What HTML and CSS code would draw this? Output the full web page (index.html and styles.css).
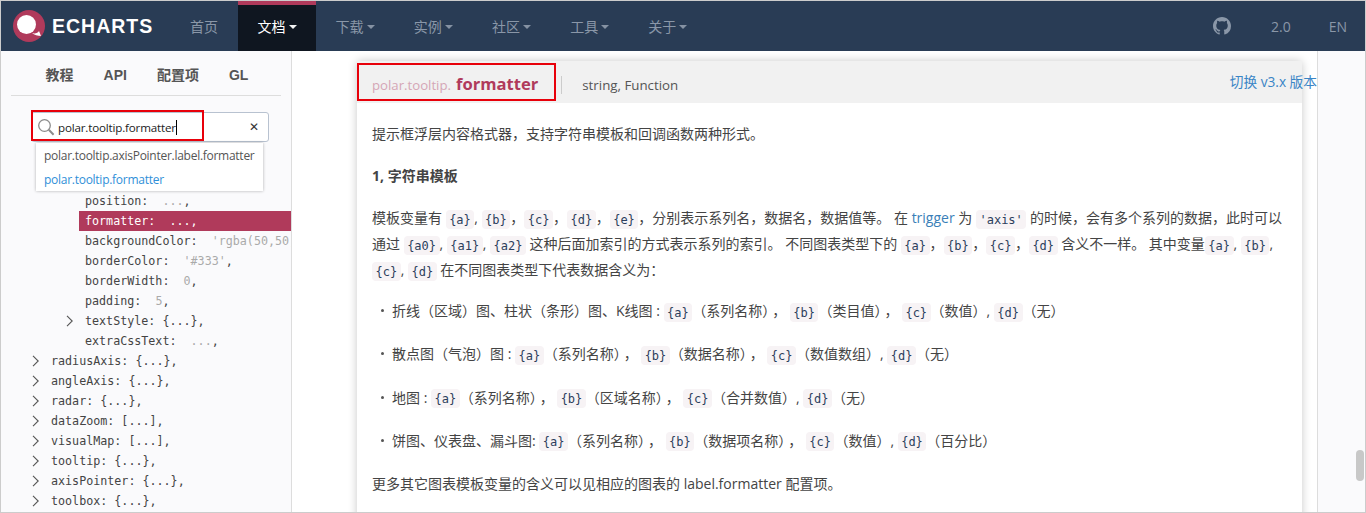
FILE: index.html
```html
<!DOCTYPE html>
<html lang="zh">
<head>
<meta charset="utf-8">
<title>ECharts</title>
<link rel="stylesheet" href="styles.css">
</head>
<body>
<svg class="defs" width="0" height="0"><symbol id="chev" viewBox="0 0 7 12"><path d="M1 .8 6.2 6 1 11.2" fill="none" stroke="#555" stroke-width="1.1"/></symbol></svg>
<div class="frame">
  <header class="nav">
    <a class="logo">
      <svg class="logo-mark" width="34" height="34" viewBox="0 0 34 34"><circle cx="17" cy="17" r="16" fill="#b03a5b"/><circle cx="14.5" cy="15.5" r="9.5" fill="#fff"/><path d="M20 24c3 1 6 0 7-2l2 5c-3 0-7-1-9-3z" fill="#fff"/></svg>
      <span class="logo-text">ECHARTS</span>
    </a>
    <a class="nav-item home">首页</a>
    <a class="nav-item active">文档<i class="caret"></i></a>
    <a class="nav-item">下载<i class="caret"></i></a>
    <a class="nav-item">实例<i class="caret"></i></a>
    <a class="nav-item">社区<i class="caret"></i></a>
    <a class="nav-item">工具<i class="caret"></i></a>
    <a class="nav-item">关于<i class="caret"></i></a>
    <div class="nav-right">
      <svg class="gh" width="18" height="18" viewBox="0 0 16 16"><path fill="#8a97a8" d="M8 0C3.58 0 0 3.58 0 8c0 3.54 2.29 6.53 5.47 7.59.4.07.55-.17.55-.38 0-.19-.01-.82-.01-1.49-2.01.37-2.53-.49-2.69-.94-.09-.23-.48-.94-.82-1.13-.28-.15-.68-.52-.01-.53.63-.01 1.08.58 1.23.82.72 1.21 1.87.87 2.33.66.07-.52.28-.87.51-1.07-1.78-.2-3.64-.89-3.64-3.95 0-.87.31-1.59.82-2.15-.08-.2-.36-1.02.08-2.12 0 0 .67-.21 2.2.82.64-.18 1.32-.27 2-.27s1.36.09 2 .27c1.53-1.04 2.2-.82 2.2-.82.44 1.1.16 1.92.08 2.12.51.56.82 1.27.82 2.15 0 3.07-1.87 3.75-3.65 3.95.29.25.54.73.54 1.48 0 1.07-.01 1.93-.01 2.2 0 .21.15.46.55.38A8.01 8.01 0 0 0 16 8c0-4.42-3.58-8-8-8z"/></svg>
      <a class="ver">2.0</a>
      <a class="lang">EN</a>
    </div>
  </header>
  <div class="main">
    <aside class="sidebar">
      <nav class="tabs">
        <a class="tab">教程</a>
        <a class="tab">API</a>
        <a class="tab on">配置项</a>
        <a class="tab">GL</a>
      </nav>
      <div class="search">
        <svg class="glass" width="18" height="18" viewBox="0 0 18 18"><circle cx="7.5" cy="7.5" r="5.8" fill="none" stroke="#8c8c8c" stroke-width="1.3"/><path d="M11.8 11.8 16.6 16.8" stroke="#8c8c8c" stroke-width="2"/></svg>
        <span class="query">polar.tooltip.formatter</span><i class="cursor"></i>
        <span class="clear">✕</span>
        <div class="suggest">
          <div class="sg">polar.tooltip.axisPointer.label.formatter</div>
          <div class="sg hit">polar.tooltip.formatter</div>
        </div>
        <div class="mark mark-search"></div>
      </div>
      <ul class="tree">
        <li class="row d2">position:  <span class="v">...</span>,</li>
        <li class="row d2 sel">formatter:  <span class="v">...</span>,</li>
        <li class="row d2">backgroundColor:  <span class="v">'rgba(50,50,50,0.7)'</span>,</li>
        <li class="row d2">borderColor:  <span class="v">'#333'</span>,</li>
        <li class="row d2">borderWidth:  <span class="v">0</span>,</li>
        <li class="row d2">padding:  <span class="v">5</span>,</li>
        <li class="row d2"><svg class="chev"><use href="#chev"/></svg>textStyle: {...},</li>
        <li class="row d2">extraCssText:  <span class="v">...</span>,</li>
        <li class="row d1"><svg class="chev"><use href="#chev"/></svg>radiusAxis: {...},</li>
        <li class="row d1"><svg class="chev"><use href="#chev"/></svg>angleAxis: {...},</li>
        <li class="row d1"><svg class="chev"><use href="#chev"/></svg>radar: {...},</li>
        <li class="row d1"><svg class="chev"><use href="#chev"/></svg>dataZoom: [...],</li>
        <li class="row d1"><svg class="chev"><use href="#chev"/></svg>visualMap: [...],</li>
        <li class="row d1"><svg class="chev"><use href="#chev"/></svg>tooltip: {...},</li>
        <li class="row d1"><svg class="chev"><use href="#chev"/></svg>axisPointer: {...},</li>
        <li class="row d1"><svg class="chev"><use href="#chev"/></svg>toolbox: {...},</li>
      </ul>
    </aside>
    <main class="center">
      <article class="card">
        <div class="card-head">
          <span class="path">polar.tooltip.</span><span class="name">formatter</span><span class="sep"></span><span class="type">string, Function</span>
          <div class="mark mark-head"></div>
        </div>
        <div class="card-body">
          <p>提示框浮层内容格式器，支持字符串模板和回调函数两种形式。</p>
          <p><strong>1, 字符串模板</strong></p>
          <p>模板变量有 <code>{a}</code>, <code>{b}</code>，<code>{c}</code>，<code>{d}</code>，<code>{e}</code>，分别表示系列名，数据名，数据值等。 在 <a class="lnk">trigger</a> 为 <code>'axis'</code> 的时候，会有多个系列的数据，此时可以<br>通过 <code>{a0}</code>, <code>{a1}</code>, <code>{a2}</code> 这种后面加索引的方式表示系列的索引。 不同图表类型下的 <code>{a}</code>，<code>{b}</code>，<code>{c}</code>，<code>{d}</code> 含义不一样。 其中变量<code>{a}</code>, <code>{b}</code>,<br><code>{c}</code>, <code>{d}</code> 在不同图表类型下代表数据含义为：</p>
          <ul class="list">
            <li>折线（区域）图、柱状（条形）图、K线图 : <code>{a}</code>（系列名称）<span class="cm">，</span><code>{b}</code>（类目值）<span class="cm">，</span><code>{c}</code>（数值）, <code>{d}</code>（无）</li>
            <li>散点图（气泡）图 : <code>{a}</code>（系列名称）<span class="cm">，</span><code>{b}</code>（数据名称）<span class="cm">，</span><code>{c}</code>（数值数组）, <code>{d}</code>（无）</li>
            <li>地图 : <code>{a}</code>（系列名称）<span class="cm">，</span><code>{b}</code>（区域名称）<span class="cm">，</span><code>{c}</code>（合并数值）, <code>{d}</code>（无）</li>
            <li>饼图、仪表盘、漏斗图: <code>{a}</code>（系列名称）<span class="cm">，</span><code>{b}</code>（数据项名称）<span class="cm">，</span><code>{c}</code>（数值）, <code>{d}</code>（百分比）</li>
          </ul>
          <p>更多其它图表模板变量的含义可以见相应的图表的 label.formatter 配置项。</p>
        </div>
      </article>
      <a class="switch">切换 v3.x 版本</a>
    </main>
    <div class="rail"><div class="thumb"></div></div>
  </div>
</div>
</body>
</html>
```

FILE: styles.css
```css
* { box-sizing: border-box; }
html, body { margin: 0; padding: 0; }
body { font-family: "Open Sans", "Noto Sans CJK SC", sans-serif; font-size: 14px; color: #444; background: #fff; }
a { text-decoration: none; }
ul { list-style: none; margin: 0; padding: 0; }
.defs { display: block; height: 0; }

.frame { height: 513px; border: 1px solid #ccc; display: flex; flex-direction: column; overflow: hidden; }

.nav { flex: 0 0 50px; height: 50px; background: #293c55; display: flex; align-items: stretch; }
.logo { width: 170px; display: flex; align-items: center; padding-left: 11px; }
.logo-mark { flex: none; margin-right: 6px; }
.logo-text { font-family: "Liberation Sans", sans-serif; font-weight: 700; font-size: 19.5px; letter-spacing: 1px; color: #fff; }
.nav-item { width: 78.2px; display: flex; align-items: center; justify-content: center; color: #8a97a8; font-size: 14px; padding-bottom: 1px; }
.nav-item.home { width: 66px; margin-right: 1px; }
.nav-item.active { width: 78px; background: #0f1620; color: #fff; border-top: 4px solid #b03a5b; padding-bottom: 4px; }
.caret { display: inline-block; width: 0; height: 0; border: 4px solid transparent; border-top-color: currentColor; border-bottom: 0; margin-left: 3px; margin-top: 2px; opacity: .95; }
.nav-right { margin-left: auto; display: flex; align-items: center; padding-right: 18px; color: #8a97a8; }
.gh { margin-right: 40px; }
.ver { margin-right: 38px; color: #8a97a8; }
.lang { color: #8a97a8; }

.main { flex: 1; display: flex; min-height: 0; }

.sidebar { flex: 0 0 291px; width: 291px; background: #fafafc; border-right: 1px solid #ddd; overflow: hidden; }
.tabs { margin: 0 10px; height: 45px; border-bottom: 1px solid #ddd; display: flex; justify-content: center; align-items: center; gap: 30px; padding: 4px 0 0 2px; }
.tab { position: relative; font-weight: 700; color: #555; font-size: 14px; line-height: 20px; font-family: "Liberation Sans", "Noto Sans CJK SC", sans-serif; }
.tab.on::before { content: ""; position: absolute; left: -5px; right: -5px; top: -24px; height: 4px; background: #b03a5b; }

.search { position: relative; margin: 16px 22px 0 30px; height: 30px; background: #fff; border: 1px solid #b8c2d0; border-radius: 3px; display: flex; align-items: center; padding-left: 5px; color: #222; font-size: 12px; }
.glass { flex: none; margin-right: 3px; margin-left: 0; }
.query { font-size: 11.6px; letter-spacing: -.17px; }
.cursor { width: 1px; height: 15px; background: #000; }
.clear { margin-left: auto; margin-right: 9px; font-size: 12px; color: #333; font-family: "DejaVu Sans", sans-serif; }
.suggest { position: absolute; left: 4px; top: 30px; width: 227px; height: 48px; background: #fff; box-shadow: 0 0 3px rgba(0,0,0,.3); z-index: 2; }
.sg { height: 23px; line-height: 24px; padding-left: 8px; color: #555; white-space: nowrap; margin-top: 1px; letter-spacing: -.27px; }
.sg.hit { color: #2f8fd8; }
.mark { position: absolute; border: 2px solid #e8000a; z-index: 3; pointer-events: none; }
.mark-search { left: -1px; top: -3px; width: 173px; height: 31px; }

.tree { margin-top: 49px; font-family: "DejaVu Sans Mono", monospace; font-size: 11.7px; color: #444; }
.row { height: 20px; line-height: 20px; white-space: pre; display: flex; align-items: center; }
.row.d1 { padding-left: 50px; }
.row.d2 { padding-left: 84px; }
.row.sel { margin-left: 78px; padding-left: 6px; background: #b03a5b; color: #fff; }
.row.sel .v { color: #fff; }
.v { color: #aaa; }
.chev { width: 7px; height: 12px; margin-left: -19px; margin-right: 12px; flex: none; }

.center { flex: 1; position: relative; padding: 10px 15px 0 65px; min-width: 0; overflow: hidden; }
.card { height: 600px; background: #fff; border-radius: 3px 3px 0 0; box-shadow: 0 0 10px rgba(0,0,0,.22); }
.card-head { position: relative; height: 42px; background: #f1f1f1; display: flex; align-items: center; padding: 3px 0 0 15px; }
.path { color: #d5a6b6; font-size: 13.2px; margin-right: 5px; margin-top: 2px; }
.name { color: #b03a5b; font-size: 16.6px; font-weight: 700; }
.sep { width: 1px; height: 18px; background: #ccc; margin: 2px 20px 0 23px; }
.type { color: #555; font-size: 13.3px; margin-top: 2px; }
.mark-head { left: 0; top: 2px; width: 199px; height: 38px; }
.switch { position: absolute; right: 0; top: 20px; color: #3a85c6; font-size: 13.7px; white-space: nowrap; }

.card-body { padding: 18px 15px 0; font-size: 14px; line-height: 26px; color: #444; white-space: nowrap; }
.card-body p { margin: 0 0 16px; }
.card-body strong { font-weight: 700; }
.lnk { color: #3a7fb8; }
code { font-family: "DejaVu Sans Mono", monospace; font-size: 12px; line-height: 1; color: #2c3e5c; background: #f7f3f5; border-radius: 4px; padding: 2.5px 3.5px; }
.cm { margin: 0 3.5px 0 3px; }
.list { margin: -1px 0 17px; }
.list li { margin-bottom: 17.33px; display: block; padding-left: 9px; }
.list li::before { content: ""; display: inline-block; width: 3px; height: 3px; border-radius: 50%; background: #555; margin-right: 8px; vertical-align: 4px; }

.rail { flex: 0 0 48px; position: relative; background: #fafafc; border-left: 1px solid #ddd; }
.thumb { position: absolute; right: 1px; top: 399px; width: 8px; height: 31px; border-radius: 4px; background: #c8c8c8; }
```
